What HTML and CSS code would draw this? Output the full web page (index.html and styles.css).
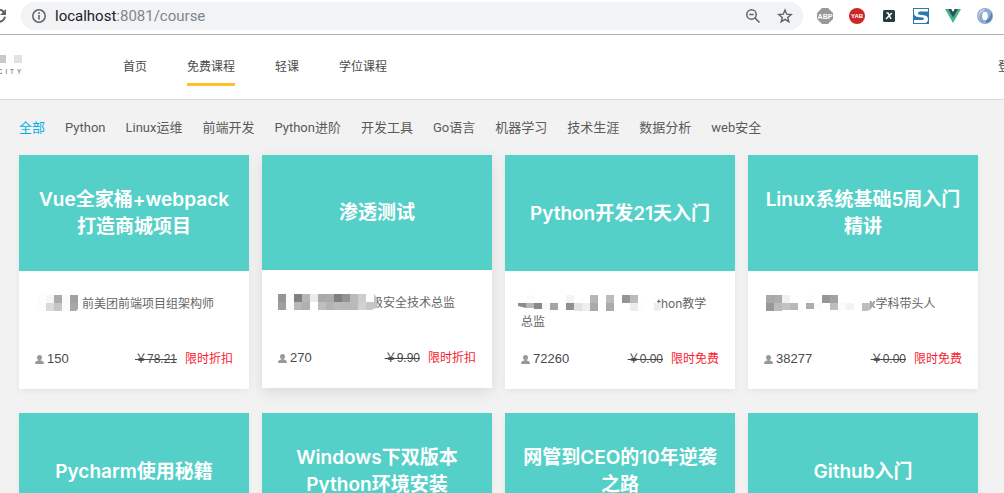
FILE: index.html
```html
<!DOCTYPE html>
<html lang="zh-CN">
<head>
<meta charset="utf-8">
<title>免费课程</title>
<link rel="stylesheet" href="styles.css">
</head>
<body>
<div class="toolbar">
  <button class="icon-btn reload" aria-label="重新加载"><svg width="16" height="16" viewBox="0 0 16 16"><path d="M13.2 4.5A6 6 0 1 0 14 8.800" fill="none" stroke="#5f6368" stroke-width="2"/><path d="M15 1v6H9z" fill="#5f6368"/></svg></button>
  <div class="address">
    <svg width="14" height="14" viewBox="0 0 14 14"><circle cx="7" cy="7" r="6.200" fill="none" stroke="#5f6368" stroke-width="1.500"/><path d="M7 6v4.500M7 3.300v1.600" stroke="#5f6368" stroke-width="1.600"/></svg>
    <span class="url">localhost<span class="url-path">:8081/course</span></span>
    <button class="icon-btn" aria-label="缩放"><svg width="16" height="16" viewBox="0 0 16 16"><circle cx="6.500" cy="6.500" r="4.700" fill="none" stroke="#5f6368" stroke-width="1.500"/><path d="M4.300 6.500h4.400M10 10l4.500 4.500" stroke="#5f6368" stroke-width="1.500"/></svg></button>
    <button class="icon-btn" aria-label="收藏"><svg width="16" height="16" viewBox="0 0 16 16"><path d="M8 2l1.700 4.200 4.500.3-3.500 2.900 1.100 4.400L8 11.400l-3.800 2.400 1.100-4.400L1.800 6.500l4.500-.3z" fill="none" stroke="#5f6368" stroke-width="1.400"/></svg></button>
  </div>
  <div class="extensions">
    <button class="icon-btn" aria-label="ABP"><svg width="16" height="16" viewBox="0 0 16 16"><path d="M5 0h6l5 5v6l-5 5H5l-5-5V5z" fill="#999"/><text x="8" y="11" class="badge-text">ABP</text></svg></button>
    <button class="icon-btn" aria-label="YAB"><svg width="16" height="16" viewBox="0 0 16 16"><circle cx="8" cy="8" r="8" fill="#cc2828"/><text x="8" y="10" class="badge-text badge-small">YAB</text></svg></button>
    <button class="icon-btn" aria-label="X"><svg width="16" height="16" viewBox="0 0 16 16"><rect x="2" y="2" width="12" height="12" rx="1.500" fill="#263a45"/><path d="M5.500 5h1.500l3 6M10.800 5L5 11" fill="none" stroke="#fff" stroke-width="1.500"/></svg></button>
    <button class="icon-btn" aria-label="S"><svg width="16" height="16" viewBox="0 0 16 16"><path d="M0 0h16v16H0z" fill="#2c79ad"/><path d="M1 1h14v2.500H7q-2 .2-2 1.800t2 1.500l4 .4q4 .6 4 4.100T11.500 15H1v-3h8.500q1.500-.1 1.500-1.200T9.500 9.500L5 9Q1 8.300 1 5z" fill="#fff"/></svg></button>
    <button class="icon-btn" aria-label="Vue"><svg width="16" height="16" viewBox="0 0 16 16"><path d="M0 1h16L8 15z" fill="#41b883"/><path d="M3.200 1h9.600L8 9.400z" fill="#35495e"/><path d="M6.200 1h3.600L8 4z" fill="#fff"/></svg></button>
    <button class="icon-btn" aria-label="同步"><svg width="16" height="16" viewBox="0 0 16 16"><circle cx="8" cy="8" r="8" fill="#8eacd0"/><path d="M8 1a7 7 0 0 0-4 12.500A6 6 0 0 1 6 3.500z" fill="#c5d6ea"/><path d="M9 15a7 7 0 0 0 5-11q.5 6-5 8z" fill="#5b80ae"/><ellipse cx="8" cy="8" rx="2.800" ry="4.200" fill="#fff"/></svg></button>
  </div>
</div>
<header class="site-header">
  <div class="logo">
    <div class="logo-marks"><span class="mark"></span><span class="mark mark-light"></span></div>
    <span class="logo-name">CITY</span>
  </div>
  <nav class="main-nav">
    <a href="#">首页</a>
    <a href="#" class="active">免费课程</a>
    <a href="#">轻课</a>
    <a href="#">学位课程</a>
  </nav>
  <a href="#" class="login">登录</a>
</header>
<main class="content">
  <nav class="categories">
    <a href="#" class="current">全部</a>
    <a href="#">Python</a>
    <a href="#">Linux运维</a>
    <a href="#">前端开发</a>
    <a href="#">Python进阶</a>
    <a href="#">开发工具</a>
    <a href="#">Go语言</a>
    <a href="#">机器学习</a>
    <a href="#">技术生涯</a>
    <a href="#">数据分析</a>
    <a href="#">web安全</a>
  </nav>
  <section class="courses">
    <article class="card">
      <h2 class="cover">Vue全家桶+webpack打造商城项目</h2>
      <div class="details">
        <p class="teacher"><svg class="mosaic" width="47" height="16" viewBox="0 0 47 16"><path d="M3 0h8v16H3z" fill="#fdfdfd"/><path d="M11 0h8v8h-8z" fill="#f6f6f6"/><path d="M11 8h8v8h-8z" fill="#dadada"/><path d="M19 0h8v8h-8z" fill="#ababab"/><path d="M19 8h8v8h-8z" fill="#c5c5c5"/><path d="M27 0h8v16h-8z" fill="#fafafa"/><path d="M35 0h8v8h-8z" fill="#a1a1a1"/><path d="M35 8h8v6l-2 2h-6z" fill="#a7a7a7"/></svg>前美团前端项目组架构师</p>
        <div class="meta"><span class="students"><svg width="9" height="9" viewBox="0 0 9 9"><circle cx="4.500" cy="2.500" r="2.500"/><path d="M3.500 4h2v1.500q3.500.3 3.500 3.500H0q0-3.200 3.500-3.500z"/></svg>150</span><span class="prices"><del>￥78.21</del><em>限时折扣</em></span></div>
      </div>
    </article>
    <article class="card raised">
      <h2 class="cover">渗透测试</h2>
      <div class="details">
        <p class="teacher"><svg class="mosaic overlap" width="102" height="16" viewBox="0 0 102 16"><path d="M0 0h8v8H0z" fill="#969696"/><path d="M0 8h8v8H0z" fill="#9e9e9e"/><path d="M8 0h8v16H8z" fill="#fbfbfb"/><path d="M16 0h8v8h-8z" fill="#808080"/><path d="M16 8h8v8h-8z" fill="#b8b8b8"/><path d="M24 0h8v8h-8z" fill="#b6b6b6"/><path d="M24 8h8v8h-8z" fill="#b0b0b0"/><path d="M32 0h8v8h-8z" fill="#ebebeb"/><path d="M40 0h8v8h-8z" fill="#aaa"/><path d="M40 8h8v8h-8z" fill="#bebebe"/><path d="M48 0h8v8h-8z" fill="#acacac"/><path d="M48 8h8v8h-8z" fill="#b3b3b3"/><path d="M56 0h8v8h-8z" fill="#808080"/><path d="M56 8h8v8h-8z" fill="#bababa"/><path d="M64 0h8v8h-8z" fill="#949494"/><path d="M64 8h8v8h-8z" fill="#b8b8b8"/><path d="M72 0h8v16h-8z" fill="#bababa"/><path d="M80 0h8v8h-8z" fill="#cdcdcd"/><path d="M80 8h8v8h-8z" fill="#d2d2d2"/><path d="M88 0h8v8h-8z" fill="#fdfdfd"/><path d="M88 8h8v7l-3 1h-5z" fill="#c6c6c6"/><path d="M96 0l3 4v8l-3 3z" fill="#c4c4c4"/></svg>级安全技术总监</p>
        <div class="meta"><span class="students"><svg width="9" height="9" viewBox="0 0 9 9"><circle cx="4.500" cy="2.500" r="2.500"/><path d="M3.500 4h2v1.500q3.500.3 3.500 3.500H0q0-3.200 3.500-3.500z"/></svg>270</span><span class="prices"><del>￥9.90</del><em>限时折扣</em></span></div>
      </div>
    </article>
    <article class="card">
      <h2 class="cover">Python开发21天入门</h2>
      <div class="details">
        <p class="teacher"><svg class="mosaic" width="136" height="16" viewBox="0 0 136 16"><path d="M-3 8h8v5l-8-2z" fill="#8c8c8c"/><path d="M5 8h8v5H5z" fill="#b8b8b8"/><path d="M13 8h8v6h-8z" fill="#888"/><path d="M5 0h8v8H5z" fill="#fcfcfc"/><path d="M21 8h8v6h-8z" fill="#f8f8f8"/><path d="M29 8h8v7h-8z" fill="#a4a4a4"/><path d="M45 0h8v8h-8z" fill="#f4f4f4"/><path d="M45 8h8v7h-8z" fill="#909090"/><path d="M53 8h8v8h-8z" fill="#e2e2e2"/><path d="M61 8h8v8h-8z" fill="#eee"/><path d="M69 0h8v8h-8z" fill="#b6b6b6"/><path d="M69 8h8v8h-8z" fill="#aaa"/><path d="M85 0h8v8h-8z" fill="#bbb"/><path d="M85 8h8v8h-8z" fill="#ababab"/><path d="M101 0h8v8h-8z" fill="#949494"/><path d="M109 0h8v8h-8z" fill="#bbb"/><path d="M109 8h8v8h-8z" fill="#ececec"/><path d="M117 8h8v8h-8z" fill="#fdfdfd"/><path d="M133 8h7v6l-2 2h-5z" fill="#ebeeed"/></svg>thon教学总监</p>
        <div class="meta"><span class="students"><svg width="9" height="9" viewBox="0 0 9 9"><circle cx="4.500" cy="2.500" r="2.500"/><path d="M3.500 4h2v1.500q3.500.3 3.500 3.500H0q0-3.200 3.500-3.500z"/></svg>72260</span><span class="prices"><del>￥0.00</del><em>限时免费</em></span></div>
      </div>
    </article>
    <article class="card">
      <h2 class="cover">Linux系统基础5周入门精讲</h2>
      <div class="details">
        <p class="teacher"><svg class="mosaic" width="105" height="16" viewBox="0 0 105 16"><path d="M2 0h8v8H2z" fill="#a9a9a9"/><path d="M2 8h8v8H2z" fill="#989898"/><path d="M10 0h8v8h-8z" fill="#acacac"/><path d="M10 8h8v8h-8z" fill="#bbb"/><path d="M18 0h8v8h-8z" fill="#f0f0f0"/><path d="M18 8h8v7h-8z" fill="#c2c2c2"/><path d="M26 8h8v7h-8z" fill="#b8b8b8"/><path d="M42 0h8v8h-8z" fill="#fdfdfd"/><path d="M42 8h8v6h-8z" fill="#adadad"/><path d="M50 8h8v6h-8z" fill="#fafafa"/><path d="M58 0h8v8h-8z" fill="#969696"/><path d="M66 0h8v8h-8z" fill="#a2a2a2"/><path d="M66 8h8v7h-8z" fill="#bebebe"/><path d="M74 8h8v7h-8z" fill="#fbfbfb"/><path d="M82 8h8v7h-8z" fill="#f3f3f3"/><path d="M98 8h8v7l-3 1h-5z" fill="#bdbdbd"/><path d="M106 8h5l-5 7z" fill="#aaa"/></svg>x学科带头人</p>
        <div class="meta"><span class="students"><svg width="9" height="9" viewBox="0 0 9 9"><circle cx="4.500" cy="2.500" r="2.500"/><path d="M3.500 4h2v1.500q3.500.3 3.500 3.500H0q0-3.200 3.500-3.500z"/></svg>38277</span><span class="prices"><del>￥0.00</del><em>限时免费</em></span></div>
      </div>
    </article>
    <article class="card"><h2 class="cover">Pycharm使用秘籍</h2></article>
    <article class="card"><h2 class="cover">Windows下双版本Python环境安装</h2></article>
    <article class="card"><h2 class="cover">网管到CEO的10年逆袭之路</h2></article>
    <article class="card"><h2 class="cover">Github入门</h2></article>
  </section>
</main>
</body>
</html>
```
FILE: styles.css
```css
* { box-sizing: border-box; }
html { overflow: hidden; }
body {
  margin: 0;
  background: #f2f2f2;
  color: #4a4a4a;
  font-family: Inter, "Noto Sans CJK SC", sans-serif;
  font-size: 12px;
}
a { color: inherit; text-decoration: none; white-space: nowrap; }
svg { display: block; flex: none; }
.icon-btn { border: 0; padding: 0; background: none; flex: none; }

.toolbar {
  display: flex;
  align-items: center;
  height: 35px;
  padding: 0 11px 3px 0;
  background: #fff;
  border-bottom: 1px solid #b0b0b0;
}
.reload { margin-left: -9px; }
.address {
  display: flex;
  flex: 1;
  align-items: center;
  height: 28px;
  margin: 0 14px;
  padding: 0 10px 0 11px;
  border-radius: 14px;
  background: #f1f3f4;
}
.url {
  flex: 1;
  margin-left: 9px;
  font: 15px Roboto, sans-serif;
  color: #202124;
}
.url-path { color: #80868b; }
.address .icon-btn + .icon-btn { margin-left: 16px; }
.extensions { display: flex; gap: 16px; }
.badge-text {
  font: bold 7px "Liberation Sans", sans-serif;
  fill: #fff;
  text-anchor: middle;
}
.badge-small { font-size: 6px; }

.site-header {
  display: flex;
  height: 65px;
  overflow: hidden;
  background: #fff;
  border-bottom: 1px solid #dadada;
}
.logo { flex: none; width: 123px; padding-top: 20px; }
.logo-marks { display: flex; gap: 8px; margin-left: -2px; }
.mark { width: 8px; height: 8px; background: #c8c8c8; }
.mark-light { background: #e2e2e2; }
.logo-name {
  display: block;
  margin: 5px 0 0 -2px;
  font-size: 6px;
  line-height: 8px;
  letter-spacing: 3px;
}
.main-nav { display: flex; flex: 1; gap: 40px; }
.main-nav a {
  height: 51px;
  line-height: 64px;
  border-bottom: 3px solid transparent;
}
.main-nav .active { border-color: #ffc02e; }
.login { flex: none; width: 6px; line-height: 64px; }

.content { padding: 0 26px 0 19px; }
.categories {
  display: flex;
  gap: 20px;
  padding: 17px 0;
  font-family: Roboto, "Noto Sans CJK SC", sans-serif;
  font-size: 13px;
  line-height: 21px;
  color: #5a5a5a;
}
.categories .current { color: #00b0e4; }
.courses {
  display: grid;
  grid-template-columns: repeat(4, 1fr);
  gap: 24px 13px;
}
.card { background: #fff; box-shadow: 0 2px 6px rgba(0, 0, 0, 0.06); }
.raised { align-self: start; box-shadow: 0 4px 14px rgba(0, 0, 0, 0.1); }
.cover {
  display: flex;
  align-items: center;
  justify-content: center;
  height: 116px;
  margin: 0;
  padding: 0 16px;
  background: #55d0c8;
  color: #fff;
  font-size: 19px;
  font-weight: 600;
  line-height: 27px;
  text-align: center;
}
.raised .cover { height: 115px; }
.details { padding: 24px 16px 21px; }
.teacher {
  min-height: 36px;
  margin: 0 0 19px;
  padding-right: 8px;
  line-height: 18px;
  color: #666;
}
.mosaic {
  display: inline-block;
  position: relative;
  overflow: visible;
  vertical-align: top;
}
.overlap { margin-right: -9px; }
.meta {
  display: flex;
  justify-content: space-between;
  line-height: 18px;
}
.students {
  display: flex;
  align-items: center;
  gap: 3px;
  font: 13px/18px "Liberation Sans", sans-serif;
}
.students svg { fill: #999; }
.prices {
  display: flex;
  gap: 8px;
  font-family: "Liberation Sans", "Noto Sans CJK SC", sans-serif;
}
.prices em { font-style: normal; color: #fa1b2f; }
```
